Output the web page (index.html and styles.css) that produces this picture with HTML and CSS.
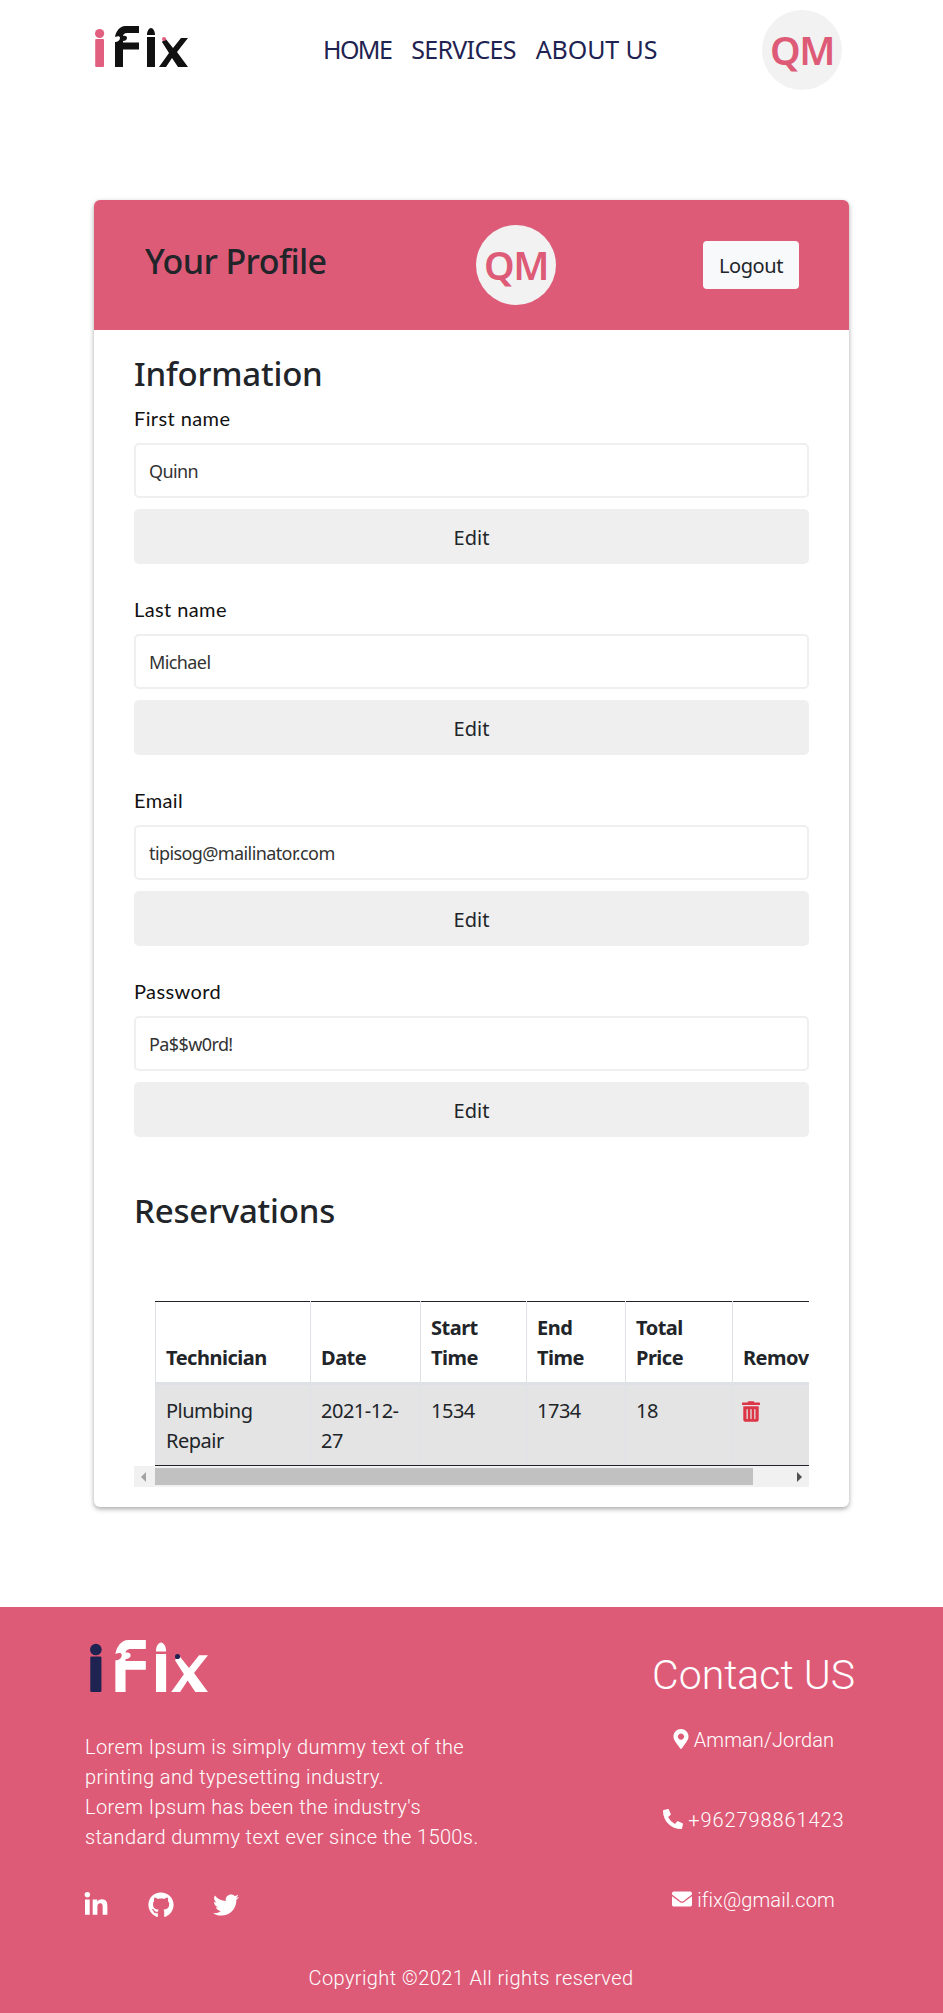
FILE: index.html
```html
<!DOCTYPE html>
<html lang="en">
<head>
    <meta charset="UTF-8">
    <meta name="viewport" content="width=device-width, initial-scale=1.0">
    <title>iFix</title>
    <link rel="stylesheet" href="styles.css">
</head>
<body>
    <header class="topbar">
        <a class="logo-link" href="#">
            <svg class="logo logo-top" viewBox="0 0 93 41">
                <circle class="logo-i" cx="4.6" cy="7.5" r="4.6"/>
                <rect class="logo-i" x="0.2" y="13" width="8.8" height="28" rx="1"/>
                <path class="logo-main" d="M30 0H44V7H32C29 7 28 9 28 10C30 9.5 32 10 32 12C32 14 30 15 28 15V16.5H44V23.5H28V41H20V16C23 16 25 14 25 12C25 10 23 10 20 11C21 5 25 0 30 0Z"/>
                <path class="logo-main" d="M52 9C52 5 54 2 56 2C58 2 60 5 60 9ZM52 11H60V41H52Z"/>
                <path class="logo-main" d="M70 12L78 22L86 12H93L82 26L93 41H83L77 32L71 41H64L74 27L67 16Z"/>
                <circle class="logo-dot" cx="69" cy="13" r="2"/>
            </svg>
        </a>
        <nav class="mainnav">
            <a class="nav-home" href="#">HOME</a>
            <a href="#">SERVICES</a>
            <a class="nav-about" href="#">ABOUT US</a>
        </nav>
        <div class="avatar">QM</div>
    </header>

    <main class="profile-card">
        <div class="profile-head">
            <h1>Your Profile</h1>
            <div class="avatar">QM</div>
            <button class="logout">Logout</button>
        </div>
        <div class="profile-body">
            <h2>Information</h2>

            <div class="field">
                <label>First name</label>
                <input type="text" value="Quinn">
                <button class="edit">Edit</button>
            </div>
            <div class="field">
                <label>Last name</label>
                <input type="text" value="Michael">
                <button class="edit">Edit</button>
            </div>
            <div class="field">
                <label>Email</label>
                <input type="text" value="tipisog@mailinator.com">
                <button class="edit">Edit</button>
            </div>
            <div class="field">
                <label>Password</label>
                <input type="text" value="Pa$$w0rd!">
                <button class="edit">Edit</button>
            </div>

            <h2 class="res-title">Reservations</h2>

            <div class="table-wrap">
                <table>
                    <thead>
                        <tr>
                            <th class="c1">Technician</th>
                            <th class="c2">Date</th>
                            <th class="c3">Start Time</th>
                            <th class="c4">End Time</th>
                            <th class="c5">Total Price</th>
                            <th class="c6">Remove</th>
                        </tr>
                    </thead>
                    <tbody>
                        <tr>
                            <td>Plumbing Repair</td>
                            <td>2021-12-27</td>
                            <td>1534</td>
                            <td>1734</td>
                            <td>18</td>
                            <td>
                                <svg class="trash" viewBox="0 0 448 512"><path d="M32 464a48 48 0 0 0 48 48h288a48 48 0 0 0 48-48V128H32zm272-256a16 16 0 0 1 32 0v224a16 16 0 0 1-32 0zm-96 0a16 16 0 0 1 32 0v224a16 16 0 0 1-32 0zm-96 0a16 16 0 0 1 32 0v224a16 16 0 0 1-32 0zM432 32H312l-9.4-18.7A24 24 0 0 0 281.1 0H166.8a23.72 23.72 0 0 0-21.4 13.3L136 32H16A16 16 0 0 0 0 48v32a16 16 0 0 0 16 16h416a16 16 0 0 0 16-16V48a16 16 0 0 0-16-16z"/></svg>
                            </td>
                        </tr>
                    </tbody>
                </table>
            </div>
            <div class="scrollbar">
                <span class="arrow-left"></span>
                <div class="track"><div class="thumb"></div></div>
                <span class="arrow-right"></span>
            </div>
        </div>
    </main>

    <footer class="site-footer">
        <div class="footer-cols">
            <div class="footer-about">
                <svg class="logo logo-bottom" viewBox="0 0 93 41">
                    <circle class="logo-i" cx="4.6" cy="7.5" r="4.6"/>
                    <rect class="logo-i" x="0.2" y="13" width="8.8" height="28" rx="1"/>
                    <path class="logo-main" d="M30 0H44V7H32C29 7 28 9 28 10C30 9.5 32 10 32 12C32 14 30 15 28 15V16.5H44V23.5H28V41H20V16C23 16 25 14 25 12C25 10 23 10 20 11C21 5 25 0 30 0Z"/>
                    <path class="logo-main" d="M52 9C52 5 54 2 56 2C58 2 60 5 60 9ZM52 11H60V41H52Z"/>
                    <path class="logo-main" d="M70 12L78 22L86 12H93L82 26L93 41H83L77 32L71 41H64L74 27L67 16Z"/>
                    <circle class="logo-dot" cx="69" cy="13" r="2"/>
                </svg>
                <p>Lorem Ipsum is simply dummy text of the<br>printing and typesetting industry.<br>Lorem Ipsum has been the industry's<br>standard dummy text ever since the 1500s.</p>
                <div class="socials">
                    <svg class="social" viewBox="0 0 448 512"><path d="M100.28 448H7.4V148.9h92.88zM53.79 108.1C24.09 108.1 0 83.5 0 53.8a53.79 53.79 0 0 1 107.58 0c0 29.7-24.1 54.3-53.79 54.3zM447.9 448h-92.68V302.4c0-34.7-.7-79.2-48.29-79.2-48.29 0-55.69 37.7-55.69 76.7V448h-92.78V148.9h89.08v40.8h1.3c12.4-23.5 42.69-48.3 87.88-48.3 94 0 111.28 61.9 111.28 142.3V448z"/></svg>
                    <svg class="social" viewBox="0 0 496 512"><path d="M165.9 397.4c0 2-2.3 3.6-5.2 3.6-3.3 0-5.6-1.6-5.6-3.6 0-2 2.3-3.6 5.2-3.6 3-.3 5.6 1.3 5.6 3.6zm-31.1-4.5c-.7 2 1.3 4.3 4.3 4.9 2.6 1 5.6 0 6.2-2s-1.3-4.3-4.3-5.2c-2.6-.7-5.5.3-6.2 2.3zm44.2-1.7c-2.9.7-4.9 2.6-4.6 4.9.3 2 2.9 3.3 5.9 2.6 2.9-.7 4.9-2.6 4.6-4.6-.3-1.9-3-3.2-5.9-2.9zM244.8 8C106.1 8 0 113.3 0 252c0 110.9 69.8 205.8 169.5 239.2 12.8 2.3 17.3-5.6 17.3-12.1 0-6.2-.3-40.4-.3-61.4 0 0-70 15-84.7-29.8 0 0-11.4-29.1-27.8-36.6 0 0-22.9-15.7 1.6-15.4 0 0 24.9 2 38.6 25.8 21.9 38.6 58.6 27.5 72.9 20.9 2.3-16 8.8-27.1 16-33.7-55.9-6.2-112.3-14.3-112.3-110.5 0-27.5 7.6-41.3 23.6-58.9-2.6-6.5-11.1-33.3 2.6-67.9 20.9-6.5 69 27 69 27 20-5.6 41.5-8.5 62.8-8.5s42.8 2.9 62.8 8.5c0 0 48.1-33.6 69-27 13.7 34.7 5.2 61.4 2.6 67.9 16 17.7 25.8 31.5 25.8 58.9 0 96.5-58.9 104.2-114.8 110.5 9.2 7.9 17 22.9 17 46.4 0 33.7-.3 75.4-.3 83.6 0 6.5 4.6 14.4 17.3 12.1C428.2 457.8 496 362.9 496 252 496 113.3 383.5 8 244.8 8z"/></svg>
                    <svg class="social" viewBox="0 0 512 512"><path d="M459.37 151.716c.325 4.548.325 9.097.325 13.645 0 138.72-105.583 298.558-298.558 298.558-59.452 0-114.68-17.219-161.137-47.106 8.447.974 16.568 1.299 25.34 1.299 49.055 0 94.213-16.568 130.274-44.832-46.132-.975-84.792-31.188-98.112-72.772 6.498.974 12.995 1.624 19.818 1.624 9.421 0 18.843-1.3 27.614-3.573-48.081-9.747-84.143-51.98-84.143-102.985v-1.299c13.969 7.797 30.214 12.67 47.431 13.319-28.264-18.843-46.781-51.005-46.781-87.391 0-19.492 5.197-37.36 14.294-52.954 51.655 63.675 129.3 105.258 216.365 109.807-1.624-7.797-2.599-15.918-2.599-24.04 0-57.828 46.782-104.934 104.934-104.934 30.213 0 57.502 12.67 76.67 33.137 23.715-4.548 46.456-13.32 66.599-25.34-7.798 24.366-24.366 44.833-46.132 57.827 21.117-2.273 41.584-8.122 60.426-16.243-14.292 20.791-32.161 39.308-52.628 54.253z"/></svg>
                </div>
            </div>
            <div class="footer-contact">
                <h3>Contact US</h3>
                <p>
                    <svg class="ci ci-pin" viewBox="0 0 384 512"><path d="M172.268 501.67C26.97 291.031 0 269.413 0 192 0 85.961 85.961 0 192 0s192 85.961 192 192c0 77.413-26.97 99.031-172.268 309.67-9.535 13.774-29.93 13.773-39.464 0zM192 272c44.183 0 80-35.817 80-80s-35.817-80-80-80-80 35.817-80 80 35.817 80 80 80z"/></svg>
                    Amman/Jordan
                </p>
                <p class="phone">
                    <svg class="ci" viewBox="0 0 512 512"><path d="M497.39 361.8l-112-48a24 24 0 0 0-28 6.9l-49.6 60.6A370.66 370.66 0 0 1 130.6 204.11l60.6-49.6a23.94 23.94 0 0 0 6.9-28l-48-112A24.16 24.16 0 0 0 122.6.61l-104 24A24 24 0 0 0 0 48c0 256.5 207.9 464 464 464a24 24 0 0 0 23.4-18.6l24-104a24.29 24.29 0 0 0-14.01-27.6z"/></svg>
                    +962798861423
                </p>
                <p>
                    <svg class="ci" viewBox="0 0 512 512"><path d="M502.3 190.8c3.9-3.1 9.7-.2 9.7 4.7V400c0 26.5-21.5 48-48 48H48c-26.5 0-48-21.5-48-48V195.6c0-5 5.7-7.8 9.7-4.7 22.4 17.4 52.1 39.5 154.1 113.6 21.1 15.4 56.7 47.8 92.2 47.6 35.7.3 72-32.8 92.3-47.6 102-74.1 131.6-96.3 154-113.7zM256 320c23.2.4 56.6-29.2 73.4-41.4 132.7-96.3 142.8-104.7 173.4-128.7 5.8-4.5 9.2-11.5 9.2-18.9v-19c0-26.5-21.5-48-48-48H48C21.5 64 0 85.5 0 112v19c0 7.4 3.4 14.3 9.2 18.9 30.6 23.9 40.7 32.4 173.4 128.7 16.8 12.2 50.2 41.8 73.4 41.4z"/></svg>
                    ifix@gmail.com
                </p>
            </div>
        </div>
        <div class="copyright">Copyright ©2021 All rights reserved</div>
    </footer>
</body>
</html>
```

FILE: styles.css
```css
* {
    box-sizing: border-box;
}

body {
    font-family: 'Noto Sans', sans-serif;
    font-size: 20px;
    color: #212529;
    background-color: #ffffff;
    margin: 0;
}

/* top bar */
.topbar {
    height: 100px;
    padding: 10px 101px 10px 95px;
    display: flex;
    align-items: center;
}

.logo-link {
    display: block;
    height: 41px;
    margin-top: -7px;
}

.logo {
    display: block;
}

.logo-top {
    width: 93px;
    height: 41px;
}

.logo-top .logo-i,
.logo-top .logo-dot {
    fill: #e25f80;
}

.logo-top .logo-main {
    fill: #111111;
}

.mainnav {
    margin-left: 135px;
    display: flex;
    gap: 20px;
    margin-top: -2px;
}

.mainnav a {
    font-size: 25px;
    color: #1f2351;
    text-decoration: none;
    letter-spacing: -0.7px;
}

.mainnav .nav-home {
    letter-spacing: -1.6px;
}

.mainnav .nav-about {
    letter-spacing: -0.1px;
}

.avatar {
    width: 80px;
    height: 80px;
    border-radius: 50%;
    background-color: #f2f2f2;
    color: #de5b78;
    font-size: 39px;
    font-weight: 600;
    line-height: 80px;
    text-align: center;
    flex-shrink: 0;
    letter-spacing: -1.4px;
}

.topbar .avatar {
    margin-left: auto;
}

/* profile card */
.profile-card {
    width: 755px;
    margin: 100px 0 100px 94px;
    border-radius: 6px;
    box-shadow: 0 2px 5px rgba(0,0,0,0.35);
    background-color: #ffffff;
    height: 1307px;
}

.profile-head {
    height: 130px;
    background-color: #de5b78;
    border-radius: 6px 6px 0 0;
    padding: 25px 50px;
    display: flex;
    align-items: center;
}

.profile-head h1 {
    margin: -8px 0 0 1px;
    width: 331px;
    font-size: 34px;
    font-weight: 500;
    letter-spacing: -0.6px;
}

.logout {
    margin-left: auto;
    width: 96px;
    height: 48px;
    border: none;
    border-radius: 4px;
    background-color: #f8f9fa;
    color: #212529;
    font-family: inherit;
    font-size: 20px;
    letter-spacing: -0.4px;
}

.profile-body {
    padding: 25px 40px 0 40px;
}

h2 {
    margin: 0;
    font-size: 33px;
    font-weight: 500;
    line-height: 38px;
    letter-spacing: -0.2px;
}

.field {
    height: 191px;
    padding-top: 10px;
}

.field label {
    display: block;
    font-family: 'Lato', sans-serif;
    font-size: 20px;
    line-height: 30px;
    letter-spacing: 0.4px;
    color: #111111;
    margin-bottom: 10px;
}

.field input {
    display: block;
    width: 100%;
    height: 55px;
    padding: 0 13px;
    border: 2px solid #efefef;
    border-radius: 5px;
    color: #333333;
    font-family: inherit;
    font-size: 18px;
    letter-spacing: -0.6px;
    outline: none;
}

.edit {
    display: block;
    width: 100%;
    height: 55px;
    margin-top: 11px;
    padding-top: 3px;
    border: none;
    border-radius: 5px;
    background-color: #efefef;
    color: #212529;
    font-family: inherit;
    font-size: 20px;
}

.res-title {
    margin-top: 35px;
}

/* reservations table */
.table-wrap {
    margin-top: 71px;
    padding-left: 21px;
    overflow: hidden;
}

table {
    border-collapse: collapse;
    table-layout: fixed;
    width: 680px;
    font-size: 20px;
    line-height: 30px;
    letter-spacing: -0.5px;
}

th, td {
    border: 1px solid #dee2e6;
    padding: 11px 10px 9px 10px;
    text-align: left;
    vertical-align: top;
    font-weight: 400;
}

thead th {
    font-weight: 700;
    vertical-align: bottom;
    border-top: 1px solid #212529;
    border-bottom: 3px solid #dee2e6;
}

tbody td {
    background-color: #e4e4e4;
    border-bottom: 1px solid #212529;
}

.c1 { width: 155px; }
.c2 { width: 110px; }
.c3 { width: 106px; }
.c4 { width: 99px; }
.c5 { width: 107px; }
.c6 { width: 103px; }

.trash {
    width: 18px;
    height: 21px;
    fill: #dc3545;
    display: block;
    margin: 5px 0 0 -1px;
}

.scrollbar {
    height: 21px;
    background-color: #f1f1f1;
    display: flex;
    align-items: center;
}

.track {
    flex: 1;
    height: 17px;
}

.thumb {
    width: 598px;
    height: 17px;
    background-color: #c1c1c1;
}

.arrow-left, .arrow-right {
    width: 21px;
    height: 0;
    display: block;
    position: relative;
}

.arrow-left::after, .arrow-right::after {
    content: "";
    position: absolute;
    top: -5px;
    width: 0;
    height: 0;
    border-top: 5px solid transparent;
    border-bottom: 5px solid transparent;
}

.arrow-left::after {
    left: 7px;
    border-right: 5px solid #a3a3a3;
}

.arrow-right::after {
    right: 7px;
    border-left: 5px solid #505050;
}

/* footer */
.site-footer {
    height: 406px;
    background-color: #de5b78;
    color: #ffffff;
    font-family: 'Roboto', sans-serif;
    font-weight: 300;
    padding: 33px 82px 0 85px;
}

.footer-cols {
    display: flex;
    justify-content: space-between;
    height: 323px;
}

.logo-bottom {
    width: 118px;
    height: 52px;
    margin-left: 5px;
}

.logo-bottom .logo-i,
.logo-bottom .logo-dot {
    fill: #1f2351;
}

.logo-bottom .logo-main {
    fill: #ffffff;
}

.footer-about p {
    margin: 40px 0 0 0;
    font-size: 20px;
    line-height: 30px;
    letter-spacing: 0.4px;
}

.socials {
    display: flex;
    gap: 39px;
    margin: 40px 0 0 -2px;
}

.social {
    width: 26px;
    height: 26px;
    fill: #ffffff;
}

.footer-contact {
    width: 215px;
    text-align: center;
}

.footer-contact h3 {
    margin: 5px 0 0 0;
    font-size: 41px;
    font-weight: 300;
    line-height: 60px;
    white-space: nowrap;
}

.footer-contact p {
    margin: 0 0 50px 0;
    font-size: 20px;
    line-height: 30px;
    white-space: nowrap;
    letter-spacing: 0.1px;
}

.footer-contact h3 + p {
    margin-top: 20px;
}

.footer-contact .phone {
    letter-spacing: 0.9px;
}

.ci {
    width: 20px;
    height: 20px;
    fill: #ffffff;
    vertical-align: -2px;
}

.ci-pin {
    width: 16px;
}

.copyright {
    text-align: center;
    font-size: 20px;
    line-height: 30px;
    letter-spacing: 0.4px;
    margin-left: -4px;
}
```
